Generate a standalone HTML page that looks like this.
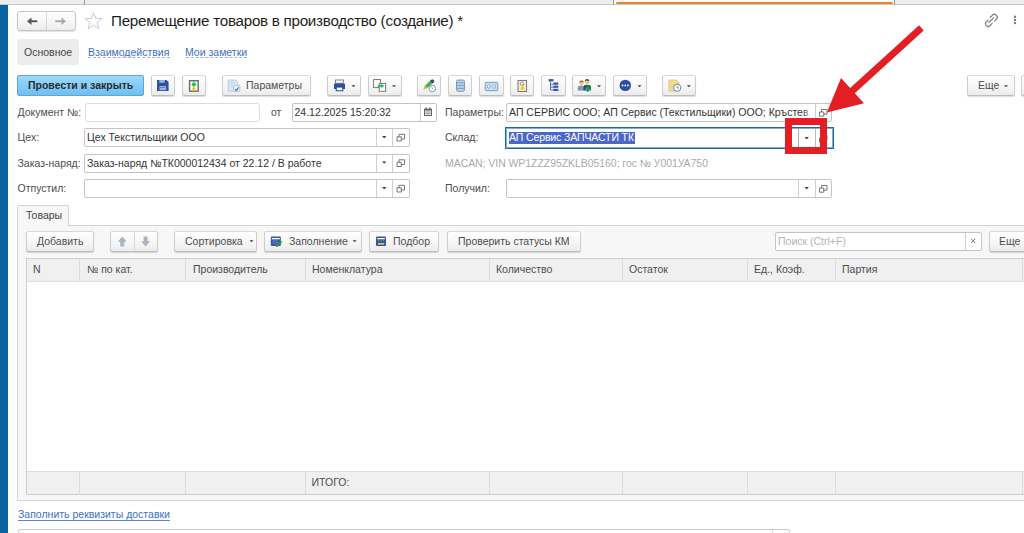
<!DOCTYPE html>
<html><head><meta charset="utf-8">
<style>
*{box-sizing:border-box;margin:0;padding:0}
html,body{width:1024px;height:533px;overflow:hidden;background:#fff}
body{position:relative;font-family:"Liberation Sans",sans-serif;font-size:10.5px;color:#4d4d4d}
.a{position:absolute}
.t{position:absolute;white-space:nowrap;line-height:1}
.btn{position:absolute;border:1px solid #cdcdcd;border-top-color:#d8d8d8;border-bottom-color:#bdbdbd;border-radius:2.5px;background:linear-gradient(#fff,#f6f6f6 55%,#ececec);box-shadow:0 1px 1px rgba(0,0,0,.14)}
.inp{position:absolute;border:1px solid #c4c4c4;border-radius:2px;background:#fff}
.dd{position:absolute;width:0;height:0;border-left:2.5px solid transparent;border-right:2.5px solid transparent;border-top:3px solid #555}
.vl{position:absolute;width:1px;background:#cfcfcf}
</style></head><body>
<!-- top strip -->
<div class="a" style="left:0;top:0;width:1024px;height:4px;background:#eeeeee;border-bottom:1px solid #c9c9c9;height:5px"></div>
<div class="a" style="left:84px;top:0;width:1px;height:5px;background:#9a9a9a"></div>
<div class="a" style="left:613px;top:0;width:1px;height:5px;background:#9a9a9a"></div>
<div class="a" style="left:614px;top:0;width:280px;height:4px;background:#fafafa"></div>
<div class="a" style="left:616px;top:2px;width:277px;height:2px;background:#e8842a;border-radius:1px"></div>
<div class="a" style="left:894px;top:0;width:1px;height:5px;background:#9a9a9a"></div>
<!-- left blue bar -->
<div class="a" style="left:0;top:5px;width:8px;height:528px;background:#0a64a0"></div>

<!-- nav buttons -->
<div class="btn" style="left:17px;top:11px;width:59px;height:20px;box-shadow:0 1px 1px rgba(0,0,0,.12);border-color:#c6c6c6;border-radius:3px"></div>
<div class="a" style="left:46px;top:12px;width:1px;height:18px;background:#d6d6d6"></div>
<!-- star -->
<svg class="a" style="left:84px;top:12px" width="19" height="18" viewBox="0 0 19 18"><polygon points="9.5,0.8 11.8,6.4 18,6.6 13.1,10.5 14.9,16.8 9.5,13.2 4.1,16.8 5.9,10.5 1,6.6 7.2,6.4" fill="none" stroke="#c4ccd2" stroke-width="1"/></svg>
<div class="t" style="left:111px;top:13px;font-size:15.2px;letter-spacing:-0.27px;color:#1e1e1e">Перемещение товаров в производство (создание) *</div>

<!-- tabs -->
<div class="a" style="left:17px;top:39px;width:62px;height:26px;background:#ececec;border-radius:3px"></div>
<div class="t" style="left:24px;top:47px;color:#444">Основное</div>
<div class="t" style="left:88px;top:47px;color:#3f6fbf">Взаимодействия</div><div class="a" style="left:88px;top:56.5px;width:82px;height:0;border-top:1px dashed #98b2e0"></div>
<div class="t" style="left:185px;top:47px;color:#3f6fbf">Мои заметки</div><div class="a" style="left:185.5px;top:56.5px;width:61px;height:0;border-top:1px dashed #98b2e0"></div>

<!-- main toolbar -->
<div class="a" style="left:17px;top:75px;width:127px;height:21px;border:1px solid #5aa7d8;border-radius:2px;background:linear-gradient(#9fd8fb,#6cc0f2)"></div>
<div class="t" style="left:28px;top:80px;font-weight:bold;color:#2b2b2b">Провести и закрыть</div>
<div class="btn" style="left:151px;top:75px;width:24px;height:21px"></div>
<div class="btn" style="left:182px;top:75px;width:24px;height:21px"></div>
<div class="btn" style="left:222px;top:75px;width:89px;height:21px"></div>
<div class="t" style="left:246px;top:80px">Параметры</div>
<div class="btn" style="left:327px;top:75px;width:34px;height:21px"></div>
<div class="btn" style="left:368px;top:75px;width:34px;height:21px"></div>
<div class="btn" style="left:417px;top:75px;width:24px;height:21px"></div>
<div class="btn" style="left:448px;top:75px;width:24px;height:21px"></div>
<div class="btn" style="left:479px;top:75px;width:25px;height:21px"></div>
<div class="btn" style="left:510px;top:75px;width:24px;height:21px"></div>
<div class="btn" style="left:541px;top:75px;width:25px;height:21px"></div>
<div class="btn" style="left:572px;top:75px;width:34px;height:21px"></div>
<div class="btn" style="left:613px;top:75px;width:34px;height:21px"></div>
<div class="btn" style="left:662px;top:75px;width:34px;height:21px"></div>
<div class="btn" style="left:967px;top:75px;width:48px;height:21px"></div>
<div class="t" style="left:978px;top:80px">Еще</div>
<div class="btn" style="left:1021px;top:75px;width:20px;height:21px"></div>

<!-- form -->
<div class="t" style="left:17.5px;top:107px">Документ №:</div>
<div class="inp" style="left:85px;top:103px;width:175px;height:19px;border-color:#dcdcdc;border-radius:3px"></div>
<div class="t" style="left:271px;top:107px">от</div>
<div class="inp" style="left:292px;top:103px;width:145px;height:19px"></div>
<div class="t" style="left:294.5px;top:107px;color:#333">24.12.2025 15:20:32</div>
<div class="vl" style="left:420px;top:104px;height:17px"></div>

<div class="t" style="left:17.5px;top:132px">Цех:</div>
<div class="inp" style="left:84px;top:128px;width:326px;height:19px"></div>
<div class="t" style="left:87px;top:132px;color:#333">Цех Текстильщики ООО</div>
<div class="vl" style="left:376px;top:129px;height:17px"></div>
<div class="vl" style="left:392px;top:129px;height:17px"></div>

<div class="t" style="left:17.5px;top:158px">Заказ-наряд:</div>
<div class="inp" style="left:84px;top:154px;width:326px;height:19px"></div>
<div class="t" style="left:87px;top:158px;color:#333">Заказ-наряд №ТК000012434 от 22.12 / В работе</div>
<div class="vl" style="left:376px;top:155px;height:17px"></div>
<div class="vl" style="left:392px;top:155px;height:17px"></div>

<div class="t" style="left:17.5px;top:183px">Отпустил:</div>
<div class="inp" style="left:84px;top:179px;width:326px;height:19px"></div>
<div class="vl" style="left:376px;top:180px;height:17px"></div>
<div class="vl" style="left:392px;top:180px;height:17px"></div>

<div class="t" style="left:445px;top:107px">Параметры:</div>
<div class="inp" style="left:506px;top:103px;width:326px;height:19px"></div>
<div class="a" style="left:507px;top:104px;width:308px;height:17px;overflow:hidden"><div class="t" style="left:2px;top:3px;color:#333">АП СЕРВИС ООО; АП Сервис (Текстильщики) ООО; Кръстев А. Г.</div><div class="a" style="left:296px;top:0;width:12px;height:17px;background:linear-gradient(90deg,rgba(255,255,255,0),#fff 85%)"></div></div>
<div class="vl" style="left:815px;top:104px;height:17px"></div>

<div class="t" style="left:445px;top:132px">Склад:</div>
<div class="a" style="left:505px;top:127px;width:329px;height:22px;border:1px solid #1a6aa5;box-shadow:inset 0 0 0 1px rgba(26,106,165,.55);background:#fff"></div>
<div class="a" style="left:509px;top:132px;width:126px;height:12px;background:#4a67c9"></div>
<div class="t" style="left:509px;top:132px;color:#fff;letter-spacing:-0.12px">АП Сервис ЗАПЧАСТИ ТК</div>
<div class="vl" style="left:798px;top:129px;height:18px;background:#aaa"></div>
<div class="vl" style="left:815px;top:129px;height:18px;background:#bbb"></div>

<div class="t" style="left:445px;top:158px;color:#a9a9a9;letter-spacing:-0.06px">MACAN; VIN WP1ZZZ95ZKLB05160; гос № У001УА750</div>

<div class="t" style="left:445px;top:183px">Получил:</div>
<div class="inp" style="left:506px;top:179px;width:326px;height:19px"></div>
<div class="vl" style="left:798px;top:180px;height:17px"></div>
<div class="vl" style="left:815px;top:180px;height:17px"></div>

<!-- tab panel -->
<div class="a" style="left:17px;top:225px;width:1020px;height:276px;border:1px solid #d4d4d4;background:#f7f7f7"></div>
<div class="a" style="left:17px;top:205px;width:52px;height:21px;border:1px solid #d4d4d4;border-bottom:none;border-radius:2px 2px 0 0;background:#f7f7f7"></div>
<div class="t" style="left:26px;top:210px;color:#444">Товары</div>

<div class="btn" style="left:26px;top:231px;width:68px;height:21px"></div>
<div class="t" style="left:37px;top:236px">Добавить</div>
<div class="btn" style="left:110px;top:231px;width:48px;height:21px"></div><div class="vl" style="left:134px;top:232px;height:19px;background:#d8d8d8"></div>
<div class="btn" style="left:174px;top:231px;width:83px;height:21px"></div>
<div class="t" style="left:185px;top:236px">Сортировка</div>
<div class="btn" style="left:264px;top:231px;width:98px;height:21px"></div>
<div class="t" style="left:289px;top:236px">Заполнение</div>
<div class="btn" style="left:369px;top:231px;width:70px;height:21px"></div>
<div class="t" style="left:393px;top:236px">Подбор</div>
<div class="btn" style="left:447px;top:231px;width:134px;height:21px"></div>
<div class="t" style="left:458px;top:236px">Проверить статусы КМ</div>
<div class="inp" style="left:775px;top:232px;width:207px;height:19px"></div>
<div class="t" style="left:778px;top:236px;color:#b3b3b3">Поиск (Ctrl+F)</div>
<div class="vl" style="left:965px;top:233px;height:17px"></div>
<div class="btn" style="left:989px;top:231px;width:50px;height:21px"></div>
<div class="t" style="left:999px;top:236px">Еще</div>

<!-- table -->
<div class="a" style="left:26px;top:258px;width:1000px;height:237px;border:1px solid #cfcfcf;background:#fff"></div>
<div class="a" style="left:27px;top:259px;width:997px;height:23px;background:#f0f0f0;border-bottom:1px solid #dcdcdc"></div>
<div class="a" style="left:27px;top:471px;width:997px;height:23px;background:#f0f0f0;border-top:1px solid #dcdcdc"></div>

<div class="vl" style="left:79px;top:259px;height:22px;background:#dcdcdc"></div><div class="vl" style="left:79px;top:472px;height:22px;background:#dcdcdc"></div>
<div class="vl" style="left:185px;top:259px;height:22px;background:#dcdcdc"></div><div class="vl" style="left:185px;top:472px;height:22px;background:#dcdcdc"></div>
<div class="vl" style="left:305px;top:259px;height:22px;background:#dcdcdc"></div><div class="vl" style="left:305px;top:472px;height:22px;background:#dcdcdc"></div>
<div class="vl" style="left:489px;top:259px;height:22px;background:#dcdcdc"></div><div class="vl" style="left:489px;top:472px;height:22px;background:#dcdcdc"></div>
<div class="vl" style="left:622px;top:259px;height:22px;background:#dcdcdc"></div><div class="vl" style="left:622px;top:472px;height:22px;background:#dcdcdc"></div>
<div class="vl" style="left:747px;top:259px;height:22px;background:#dcdcdc"></div><div class="vl" style="left:747px;top:472px;height:22px;background:#dcdcdc"></div>
<div class="vl" style="left:835px;top:259px;height:22px;background:#dcdcdc"></div><div class="vl" style="left:835px;top:472px;height:22px;background:#dcdcdc"></div>
<div class="vl" style="left:1022px;top:259px;height:22px;background:#dcdcdc"></div><div class="vl" style="left:1022px;top:472px;height:22px;background:#dcdcdc"></div>
<div class="t" style="left:33px;top:264px">N</div>
<div class="t" style="left:87px;top:264px">№ по кат.</div>
<div class="t" style="left:193px;top:264px">Производитель</div>
<div class="t" style="left:312px;top:264px">Номенклатура</div>
<div class="t" style="left:496px;top:264px">Количество</div>
<div class="t" style="left:629px;top:264px">Остаток</div>
<div class="t" style="left:754px;top:264px">Ед., Коэф.</div>
<div class="t" style="left:842px;top:264px">Партия</div>
<div class="t" style="left:311.5px;top:477px">ИТОГО:</div>
<div class="t" style="left:18px;top:509px;color:#3f6fbf;border-bottom:1px solid #5a86cc;padding-bottom:0px">Заполнить реквизиты доставки</div>
<div class="inp" style="left:18px;top:529px;width:772px;height:19px;border-color:#c9c9c9"></div>
<div class="vl" style="left:772px;top:530px;height:10px"></div>

<svg class="a" style="left:0;top:0" width="1024" height="533" viewBox="0 0 1024 533">
<!-- nav arrows -->
<path d="M27 21.2 L31.5 17.4 L31.5 25 Z" fill="#555"/><rect x="30" y="20.2" width="7.5" height="2.1" rx="1" fill="#555"/>
<path d="M66 21.2 L61.5 17.4 L61.5 25 Z" fill="#aaa"/><rect x="55" y="20.2" width="7.5" height="2.1" rx="1" fill="#aaa"/>
<!-- link icon -->
<g fill="none" stroke="#808080" stroke-width="1.25" stroke-linecap="round">
<path d="M990.3 17.3 L992.2 15.4 A2.3 2.3 0 0 1 996.5 19.2 L994.6 21.1"/>
<path d="M987.9 20.2 L986 22.1 A2.3 2.3 0 0 0 990.3 25.3 L992.2 23.4"/>
<path d="M988.8 22.6 L993.4 18"/>
</g>
<circle cx="1015" cy="16.8" r="1.2" fill="#777"/><circle cx="1015" cy="20" r="1.2" fill="#777"/><circle cx="1015" cy="23.1" r="1.2" fill="#777"/>
<!-- save icon -->
<path d="M157 80 L166.5 80 L168.6 82.1 L168.6 91 L157 91 Z" fill="#2f4f9f"/>
<rect x="159.3" y="80" width="5.5" height="2.8" fill="#93b3e3"/>
<rect x="159.5" y="86" width="6.6" height="4.2" fill="#9fb6dc"/>
<rect x="160" y="87.2" width="5.6" height="0.7" fill="#4e6db0"/>
<!-- post icon -->
<rect x="189.6" y="80.7" width="8.6" height="10.5" fill="#fff" stroke="#6a6a6a" stroke-width="1.4"/>
<path d="M192 83 L195.8 83 L195.8 84.6 L197 84.6 L193.9 87 L190.8 84.6 L192 84.6 Z" fill="#2fbf62"/>
<rect x="193.1" y="81.2" width="1.6" height="2" fill="#2fbf62"/>
<circle cx="193.9" cy="88.7" r="1.7" fill="#f5c800"/>
<!-- params icon -->
<path d="M228.2 80 L235 80 L237.9 82.9 L237.9 91 L228.2 91 Z" fill="#dbe8f4" stroke="#a9c5e0" stroke-width="0.8"/>
<rect x="229.5" y="82.5" width="5" height="0.6" fill="#b7cde3"/><rect x="229.5" y="84.5" width="5" height="0.6" fill="#b7cde3"/><rect x="229.5" y="86.5" width="4" height="0.6" fill="#b7cde3"/>
<rect x="233.6" y="85.6" width="6.2" height="6" rx="0.8" fill="#eef5fb" stroke="#9cc0e0" stroke-width="0.8"/>
<path d="M235 89.5 L236.3 90.4 L238.6 87.3" fill="none" stroke="#3a6ca6" stroke-width="1.1"/>
<!-- printer -->
<rect x="335.5" y="80" width="7.8" height="3.2" fill="#fff" stroke="#777" stroke-width="0.9"/>
<path d="M334 84.3 Q334 83.6 335 83.6 L344 83.6 Q345 83.6 345 84.3 L345 89 L343.3 89 L343.3 91.2 L335.7 91.2 L335.7 89 L334 89 Z" fill="#2b4f9e"/>
<rect x="336.8" y="87.6" width="5.4" height="2.6" fill="#fff"/>
<!-- two squares copy icon -->
<rect x="373.6" y="79.6" width="6.8" height="8" fill="#fff" stroke="#6b6b6b" stroke-width="0.9"/>
<rect x="379.2" y="83.6" width="6.5" height="7.7" fill="#fff" stroke="#6b6b6b" stroke-width="0.9"/>
<path d="M377.8 85 L381.2 85 L381.2 83.8 L384.3 86 L381.2 88.2 L381.2 87 L377.8 87 Z" fill="#22c06a"/>
<!-- pencil -->
<path d="M423.5 89.2 L425.2 85.4 L431.2 79.8 L433.6 82.2 L427.6 87.8 Z" fill="#3cb54a"/>
<path d="M430 81 L431.3 79.7 Q432.3 78.9 433.2 79.8 L434 80.6 Q434.7 81.5 433.8 82.3 L432.5 83.5 Z" fill="#3c4a55"/>
<path d="M423.3 89.5 L425 85.5 L427.5 87.9 Z" fill="#e8b060"/>
<circle cx="432.3" cy="88.5" r="3.3" fill="#fff" stroke="#6b8db3" stroke-width="0.9"/>
<path d="M431.6 86.6 L432.3 88.5 L433.6 89.4" fill="none" stroke="#6b8db3" stroke-width="0.8"/>
<!-- database -->
<rect x="456.5" y="80" width="8" height="11.3" rx="1.6" fill="#b9d3ec" stroke="#6f93b9" stroke-width="0.9"/>
<path d="M456.7 82.8 H464.3 M456.7 85.6 H464.3 M456.7 88.4 H464.3" stroke="#6f93b9" stroke-width="0.8"/>
<!-- tape -->
<rect x="485.2" y="82.3" width="12.6" height="8.4" rx="1.2" fill="#c6e0f5" stroke="#6d8fb4" stroke-width="0.9"/>
<rect x="487.5" y="84.8" width="2.6" height="3.2" rx="0.8" fill="#fff" stroke="#6d8fb4" stroke-width="0.7"/>
<rect x="492.9" y="84.8" width="2.6" height="3.2" rx="0.8" fill="#fff" stroke="#6d8fb4" stroke-width="0.7"/>
<!-- doc search -->
<rect x="518" y="80.4" width="8.6" height="11.1" fill="#f4ecd8" stroke="#6b6b6b" stroke-width="0.9"/>
<circle cx="521.9" cy="83.6" r="1.7" fill="none" stroke="#777" stroke-width="0.7"/>
<path d="M523.1 84.8 L524.3 86" stroke="#777" stroke-width="0.7"/>
<circle cx="522.5" cy="88.3" r="1.8" fill="#fbc90a"/>
<!-- hierarchy -->
<rect x="548.6" y="79.1" width="4.8" height="2.3" fill="#3557a8"/>
<path d="M550.5 81.4 V89.9 H553.5 M550.5 84.4 H553.5 M550.5 87.2 H553.5" fill="none" stroke="#3557a8" stroke-width="0.8"/>
<rect x="553.3" y="82.5" width="5" height="2.2" fill="#3557a8"/>
<rect x="553.3" y="85.6" width="5" height="2.2" fill="#3557a8"/>
<rect x="553.3" y="88.8" width="5" height="2.2" fill="#3557a8"/>
<!-- users -->
<path d="M577.8 90.4 L577.8 88 Q578 85.6 581.4 85.6 Q584.6 85.6 584.8 88 L584.8 90.4 Z" fill="#7395bd"/>
<path d="M580.8 85.8 L582.2 85.8 L582 90.2 L581 90.2 Z" fill="#e08a7a"/>
<circle cx="581.5" cy="83" r="2.1" fill="#e9c276"/>
<path d="M579.3 82.8 Q579.2 80.4 581.5 80.4 Q583.8 80.4 583.7 82.8 Q582.8 81.6 581.5 81.7 Q580.2 81.6 579.3 82.8 Z" fill="#8a5424"/>
<path d="M583.6 90.4 L583.6 87 Q583.8 84.8 587.2 84.8 Q590.7 84.8 590.9 87 L590.9 90.4 Z" fill="#2d3b7c"/>
<circle cx="587.1" cy="81.9" r="2.2" fill="#ebc37a"/>
<path d="M584.8 81.6 Q584.7 79.1 587.1 79.1 Q589.5 79.1 589.4 81.6 Q588.4 80.4 587.1 80.5 Q585.8 80.4 584.8 81.6 Z" fill="#3b3d5e"/>
<path d="M586.7 85.6 H588.7 V87.5 H590.9 V89.9 H588.7 V91.7 H586.7 V89.9 H584.8 V87.5 H586.7 Z" fill="#19a04a"/>
<!-- circle dots -->
<circle cx="625.3" cy="85.4" r="5.7" fill="#2b4f9e"/>
<circle cx="622.6" cy="85.4" r="0.9" fill="#fff"/><circle cx="625.3" cy="85.4" r="0.9" fill="#fff"/><circle cx="628" cy="85.4" r="0.9" fill="#fff"/>
<!-- doc clock -->
<path d="M669 80 L676.5 80 L679 82.5 L679 91 L669 91 Z" fill="#f2dc8c" stroke="#d9bf60" stroke-width="0.7"/>
<circle cx="677.2" cy="87.8" r="3.6" fill="#fff" stroke="#4d78b8" stroke-width="0.9"/>
<path d="M677.2 85.8 V88 H679" fill="none" stroke="#d33" stroke-width="0.7"/>
<!-- dropdown arrows toolbar -->
<path d="M351.5 85.2 H355.5 L353.5 87.2 Z" fill="#444"/>
<path d="M392 85.2 H396 L394 87.2 Z" fill="#444"/>
<path d="M597 85.2 H601 L599 87.2 Z" fill="#444"/>
<path d="M637.5 85.2 H641.5 L639.5 87.2 Z" fill="#444"/>
<path d="M686.8 85.2 H690.8 L688.8 87.2 Z" fill="#444"/>
<path d="M1004 85.2 H1008 L1006 87.2 Z" fill="#444"/>
</svg>

<svg class="a" style="left:0;top:0" width="1024" height="533" viewBox="0 0 1024 533">
<!-- calendar -->
<rect x="424" y="108.6" width="8" height="7.4" fill="#666"/>
<rect x="425" y="110.6" width="6" height="4.4" fill="#fff"/>
<path d="M425 112 H431 M425 113.5 H431 M427 110.6 V115 M429 110.6 V115" stroke="#888" stroke-width="0.6"/>
<rect x="425.5" y="107.4" width="1.2" height="2" fill="#666"/><rect x="429.3" y="107.4" width="1.2" height="2" fill="#666"/>
<!-- field dropdown arrows -->
<path d="M382 136 H386.4 L384.2 138.4 Z" fill="#444"/>
<path d="M382 161.4 H386.4 L384.2 163.8 Z" fill="#444"/>
<path d="M382 187 H386.4 L384.2 189.4 Z" fill="#444"/>
<path d="M804.5 137 H808.9 L806.7 139.4 Z" fill="#444"/>
<path d="M804.5 187 H808.9 L806.7 189.4 Z" fill="#444"/>
<!-- open icons -->
<g fill="none" stroke="#666" stroke-width="0.9">
<path d="M397 136.8 H401.3 V141 H397 Z M399 136.8 V134.3 H404.5 V139 H401.3"/>
<path d="M397 162.3 H401.3 V166.5 H397 Z M399 162.3 V159.8 H404.5 V164.5 H401.3"/>
<path d="M397 187.8 H401.3 V192 H397 Z M399 187.8 V185.3 H404.5 V190 H401.3"/>
<path d="M819.5 112 H823.8 V116.2 H819.5 Z M821.5 112 V109.5 H827 V114.2 H823.8"/>
<path d="M819.5 138 H823.8 V142.2 H819.5 Z M821.5 138 V135.5 H827 V140.2 H823.8"/>
<path d="M819.5 188 H823.8 V192.2 H819.5 Z M821.5 188 V185.5 H827 V190.2 H823.8"/>
</g>
<!-- table toolbar icons -->
<path d="M122.3 236.4 L126.8 241.7 L124.2 241.7 L124.2 246.5 L120.2 246.5 L120.2 241.7 L117.8 241.7 Z" fill="#a9b5c0"/>
<path d="M145.6 246.4 L150.1 241.2 L147.6 241.2 L147.6 236.4 L143.6 236.4 L143.6 241.2 L141.1 241.2 Z" fill="#a9b5c0"/>
<rect x="270.8" y="236.6" width="10" height="9.4" rx="1" fill="#3457a5"/>
<rect x="271.8" y="238" width="8" height="1.3" fill="#fff"/>
<path d="M272 241 H279 M272 243 H279 M274.2 240 V245 M276.6 240 V245" stroke="#6f8bc8" stroke-width="0.5"/>
<path d="M276.3 245.3 L280.8 240.8 L282.2 242.2 L277.7 246.7 L275.8 247 Z" fill="#2e9a3a"/>
<path d="M280.8 240.8 L281.6 240 L283 241.4 L282.2 242.2 Z" fill="#f3e36a"/>
<rect x="376" y="236.4" width="10" height="9.6" rx="1" fill="#3457a5"/>
<rect x="377.2" y="238" width="7.6" height="1.3" fill="#fff"/>
<path d="M378 240.8 H379 M380.5 240.8 H381.5 M383 240.8 H384" stroke="#9db0dd" stroke-width="0.8"/>
<rect x="378" y="243" width="6.2" height="1.7" fill="#e9c53a"/>
<path d="M971 238.6 L975.4 243 M975.4 238.6 L971 243" stroke="#666" stroke-width="0.9"/>
<path d="M249.5 240.3 H253.5 L251.5 242.3 Z" fill="#444"/>
<path d="M352.6 240.3 H356.6 L354.6 242.3 Z" fill="#444"/>
<!-- red annotation -->
<path d="M788.5 121.5 H823.5 V150.5 H788.5 Z" fill="none" stroke="#e31e24" stroke-width="7"/>
<polygon points="919.1,25.2 923.7,30.4 854.8,93.2 864,103.3 826.9,112.4 841,78 850.2,88" fill="#e31e24"/>
</svg>
</body></html>
